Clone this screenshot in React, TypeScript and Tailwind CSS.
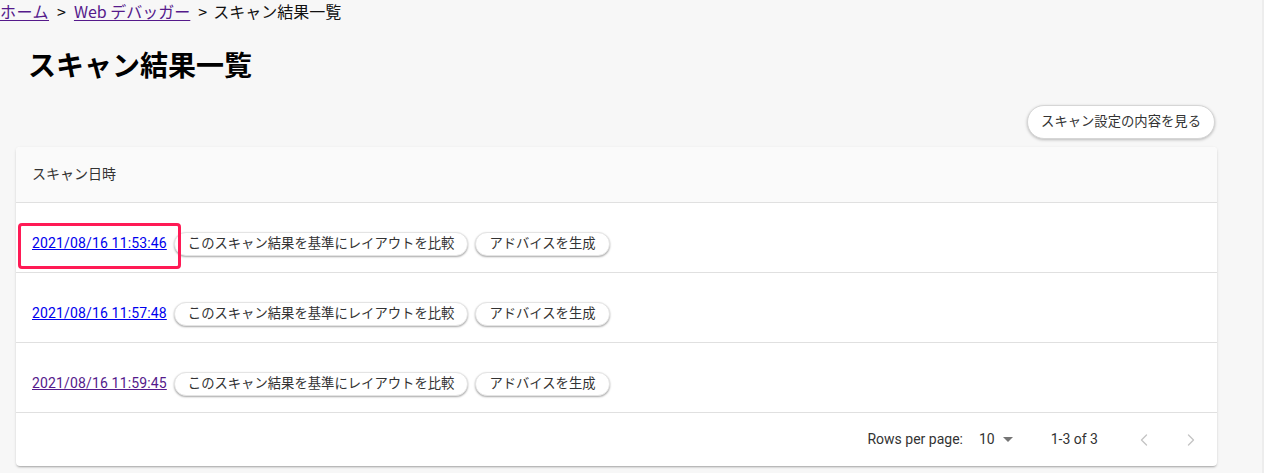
import { ChevronLeft, ChevronRight } from "lucide-react";

const rows = [
    { date: "2021/08/16 11:53:46", visited: false, marked: true },
    { date: "2021/08/16 11:57:48", visited: false, marked: false },
    { date: "2021/08/16 11:59:45", visited: true, marked: false },
];

const jp = "font-['Roboto','Noto_Sans_CJK_JP',sans-serif]";

function Chip({ label }: { label: string }) {
    return (
        <button className="h-[24px] px-[13px] rounded-full bg-white text-[13.333px] leading-none text-[#333] shadow-[0_1px_2px_rgba(0,0,0,0.35)] border border-[#e4e4e4] whitespace-nowrap">
            {label}
        </button>
    );
}

export default function App() {
    return (
        <div className={`min-h-[473px] bg-[#f7f7f7] ${jp} flex`}>
            <div className="w-[1233px] px-4">
                <nav className="-mx-4 h-[22px] text-[16px] leading-[22px] text-[#111] font-['Noto_Sans_CJK_JP',sans-serif] flex">
                    <a className="text-[#551a8b] underline underline-offset-2 tracking-[0.5px]">ホーム</a>
                    <span className="px-2">&gt;</span>
                    <a className="text-[#551a8b] underline underline-offset-2">Web デバッガー</a>
                    <span className="pl-2 pr-[6px]">&gt;</span>
                    <span>スキャン結果一覧</span>
                </nav>

                <h1 className="pl-3 pt-[22px] text-[28px] leading-[40px] font-bold text-black font-['Noto_Sans_CJK_JP',sans-serif]">
                    スキャン結果一覧
                </h1>

                <div className="flex justify-end pt-[21px] pr-[2px]">
                    <button className="h-[34px] px-[13px] rounded-full bg-white border border-[#d6d6d6] shadow-[0_1px_3px_rgba(0,0,0,0.25)] text-[13.333px] text-[#333]">
                        スキャン設定の内容を見る
                    </button>
                </div>

                <div className="mt-2 bg-white rounded shadow-[0_2px_2px_-1px_rgba(0,0,0,0.25),0_1px_3px_rgba(0,0,0,0.12)]">
                    <div className="h-[56px] flex items-center px-4 bg-[#fafafa] border-b border-[#e0e0e0] text-[14px] text-[#333] rounded-t">
                        スキャン日時
                    </div>
                    {rows.map((row) => (
                        <div key={row.date} className="relative h-[70px] flex items-center gap-[7px] px-4 pt-[12px] border-b border-[#e0e0e0]">
                            <a className={`text-[14px] tracking-[0.15px] underline font-['Roboto',sans-serif] ${row.visited ? "text-[#551a8b]" : "text-[#0000ee]"}`}>
                                {row.date}
                            </a>
                            <Chip label="このスキャン結果を基準にレイアウトを比較" />
                            <Chip label="アドバイスを生成" />
                            {row.marked && (
                                <div className="absolute left-[2px] top-[20px] w-[163px] h-[46px] border-[3px] border-[#ff1a55] rounded-[4px]" />
                            )}
                        </div>
                    ))}
                    <div className="h-[53px] flex items-center justify-end text-[14px] text-[#333] font-['Roboto',sans-serif] pr-4">
                        <span>Rows per page:</span>
                        <span className="ml-4">10</span>
                        <svg className="ml-2" width="10" height="5" viewBox="0 0 10 5">
                            <path d="M0 0 L5 5 L10 0 Z" fill="#757575" />
                        </svg>
                        <span className="ml-[38px]">1-3 of 3</span>
                        <ChevronLeft className="ml-[36px] text-[#c4c4c4]" size={20} strokeWidth={1.6} />
                        <ChevronRight className="ml-[27px] text-[#c4c4c4]" size={20} strokeWidth={1.6} />
                    </div>
                </div>
            </div>
            <div className="flex-1" />
            <div className="w-[2px] bg-[#ededed]" />
        </div>
    );
}
